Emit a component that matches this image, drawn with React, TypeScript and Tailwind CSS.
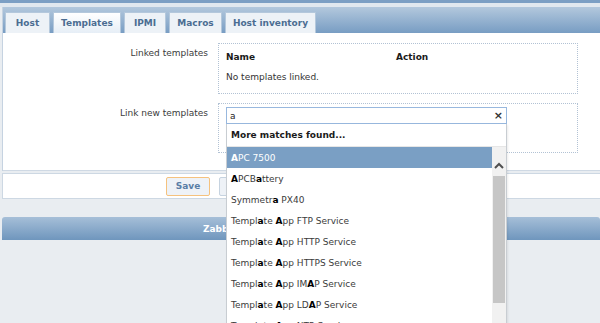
import React from "react";

const tabs = [
  { id: 1, text: "Host", width: "w-[45px]" },
  { id: 2, text: "Templates", width: "w-[68px]", active: true },
  { id: 3, text: "IPMI", width: "w-[42px]" },
  { id: 4, text: "Macros", width: "w-[53px]" },
  { id: 5, text: "Host inventory", width: "w-[91px]" },
];

const matches = [
  "APC 7500",
  "APCBattery",
  "Symmetra PX40",
  "Template App FTP Service",
  "Template App HTTP Service",
  "Template App HTTPS Service",
  "Template App IMAP Service",
  "Template App LDAP Service",
  "Template App NTP Service",
];

// bold every "a" that matches the typed search
const mark = (s: string, selected: boolean) =>
  s.split("").map((c, i) =>
    /a/i.test(c) ? (
      <b key={i} className={selected ? "font-bold text-white" : "font-bold text-black"}>
        {c}
      </b>
    ) : (
      c
    )
  );

const App: React.FC = () => {
  return (
    <div className="w-[600px] h-[323px] overflow-hidden bg-[#e9edf1] text-[9px] leading-[12px] text-[#333] font-['DejaVu_Sans',sans-serif]">
      <div className="h-[3px] bg-[#7c9fc4]" />
      <div className="h-[4px] bg-[#e1e8ef]" />

      <div className="ml-[2px] border-l border-[#c6d3e1]">
        <div className="h-[26px] flex items-end gap-[3px] pl-[2px] bg-linear-to-b from-[#b3c8dd] to-[#789dc3]">
          {tabs.map((tab) => (
            <div
              key={tab.id}
              className={`${tab.width} h-[21px] flex items-center justify-center border border-b-0 border-[#b4c8dc] font-bold text-[#4b6d92] ${
                tab.active ? "bg-linear-to-b from-white to-[#e6eef6]" : "bg-[#edf2f7]"
              }`}
            >
              {tab.text}
            </div>
          ))}
        </div>

        <div className="h-[138px] bg-white border-b border-[#cfd9e4] pt-[10px]">
          <div className="flex">
            <div className="w-[205px] text-right pt-[4px] text-[#3a3a3a]">Linked templates</div>
            <div className="ml-[10px] w-[360px] h-[51px] border border-dotted border-[#b2c2d4] px-[7px]">
              <div className="h-[26px] flex items-center font-bold text-[#1a1a1a]">
                <div className="w-[170px]">Name</div>
                <div>Action</div>
              </div>
              <div className="h-[14px] flex items-center">No templates linked.</div>
            </div>
          </div>

          <div className="flex mt-[9px]">
            <div className="w-[205px] text-right pt-[4px] text-[#3a3a3a]">Link new templates</div>
            <div className="ml-[10px] w-[360px] h-[50px] border border-dotted border-[#b2c2d4] pt-[3px] pl-[7px]">
              <div className="relative w-[281px] h-[17px] border border-[#98b8de] bg-white flex items-center justify-between px-[3px] z-10">
                <span className="text-[#222]">a</span>
                <span className="text-[11px] leading-none text-[#333] font-bold">×</span>

                <div className="absolute left-[-1px] top-[16px] w-[281px] bg-white border-x border-[#c8cdd2] shadow-[1px_1px_2px_rgba(0,0,0,0.08)]">
                  <div className="h-[23px] flex items-center pl-[4px] font-bold text-[#1a1a1a] border-b border-[#e6e6e6]">
                    More matches found...
                  </div>
                  <div className="flex">
                    <div className="w-[265px]">
                      {matches.map((m, i) => (
                        <div
                          key={m}
                          className={`h-[21px] flex items-center pl-[4px] ${
                            i === 0 ? "bg-[#7a9fc4] text-white" : "text-[#3b3b3b]"
                          }`}
                        >
                          <span className="whitespace-pre">{mark(m, i === 0)}</span>
                        </div>
                      ))}
                    </div>
                    <div className="w-[14px] bg-[#f1f1f1] flex flex-col">
                      <div className="h-[29px] flex justify-center pt-[15px]">
                        <svg width="10" height="7" viewBox="0 0 10 7">
                          <polyline points="1,6 5,2 9,6" fill="none" stroke="#505050" strokeWidth="2" />
                        </svg>
                      </div>
                      <div className="h-[127px] mx-[1px] bg-[#c6c6c6]" />
                      <div className="flex-1" />
                    </div>
                  </div>
                </div>
              </div>
            </div>
          </div>
        </div>
      </div>

      <div className="mt-[2px] ml-[2px] h-[26px] bg-white border-l border-y border-[#cdd8e3] flex items-center gap-[9px] pl-[163px]">
        <button className="w-[44px] h-[19px] rounded-[2px] border border-[#f5c27e] bg-[#eef2f7] font-bold text-[#5a7ea6]">
          Save
        </button>
        <button className="w-[46px] h-[19px] rounded-[2px] border border-[#c6d3e0] bg-[#eef2f7] font-bold text-[#5a7ea6]">
          Clone
        </button>
        <button className="w-[60px] h-[19px] rounded-[2px] border border-[#c6d3e0] bg-[#eef2f7] font-bold text-[#5a7ea6]">
          Full clone
        </button>
        <button className="w-[48px] h-[19px] rounded-[2px] border border-[#c6d3e0] bg-[#eef2f7] font-bold text-[#5a7ea6]">
          Delete
        </button>
      </div>

      <div className="mt-[18px] ml-[2px] h-[23px] rounded-t-[3px] bg-linear-to-b from-[#a6bfd8] to-[#6f96bd] flex items-center pl-[201px] font-bold text-white whitespace-nowrap">
        Zabbix 2.4.8 Copyright 2001-2016 by Zabbix SIA
      </div>
    </div>
  );
};

export default App;
